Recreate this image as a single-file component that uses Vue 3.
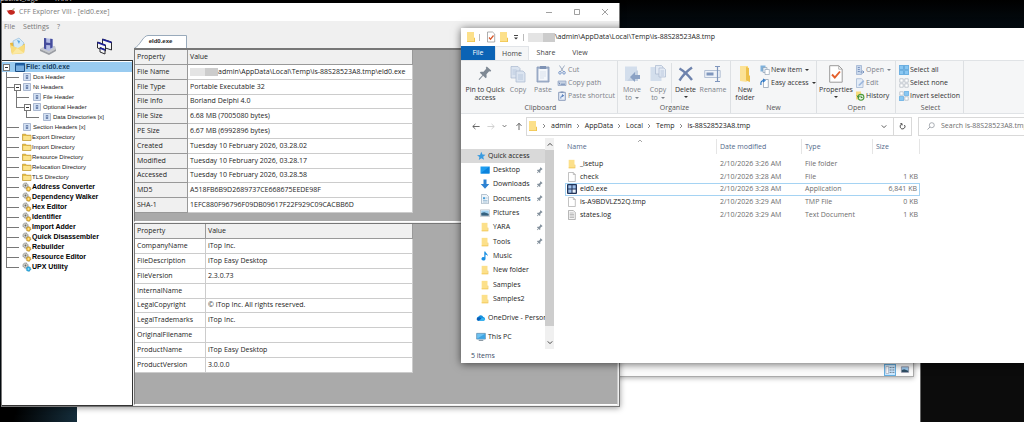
<script setup>
const tree = [
  { g: 't', icon: 'doc', text: 'Dos Header' },
  { g: 't', icon: 'doc', text: 'Nt Headers', open: true },
  { g: 'vt', icon: 'doc', text: 'File Header' },
  { g: 'vl', icon: 'doc', text: 'Optional Header', open: true },
  { g: 'vel', icon: 'doc', text: 'Data Directories [x]' },
  { g: 't', icon: 'doc', text: 'Section Headers [x]' },
  { g: 't', icon: 'dir', text: 'Export Directory' },
  { g: 't', icon: 'dir', text: 'Import Directory' },
  { g: 't', icon: 'dir', text: 'Resource Directory' },
  { g: 't', icon: 'dir', text: 'Relocation Directory' },
  { g: 't', icon: 'dir', text: 'TLS Directory' },
  { g: 't', icon: 'gear', text: 'Address Converter', bold: true },
  { g: 't', icon: 'gear', text: 'Dependency Walker', bold: true },
  { g: 't', icon: 'gear', text: 'Hex Editor', bold: true },
  { g: 't', icon: 'gear', text: 'Identifier', bold: true },
  { g: 't', icon: 'gear', text: 'Import Adder', bold: true },
  { g: 't', icon: 'gear', text: 'Quick Disassembler', bold: true },
  { g: 't', icon: 'gear', text: 'Rebuilder', bold: true },
  { g: 't', icon: 'gear', text: 'Resource Editor', bold: true },
  { g: 'l', icon: 'gear-blue', text: 'UPX Utility', bold: true },
]
const fileInfo = [
  ['File Name', 'admin\\AppData\\Local\\Temp\\is-88S28523A8.tmp\\eld0.exe'],
  ['File Type', 'Portable Executable 32'],
  ['File Info', 'Borland Delphi 4.0'],
  ['File Size', '6.68 MB (7005080 bytes)'],
  ['PE Size', '6.67 MB (6992896 bytes)'],
  ['Created', 'Tuesday 10 February 2026, 03.28.02'],
  ['Modified', 'Tuesday 10 February 2026, 03.28.17'],
  ['Accessed', 'Tuesday 10 February 2026, 03.28.58'],
  ['MD5', 'A518FB6B9D2689737CE668675EEDE98F'],
  ['SHA-1', '1EFC880F96796F09DB09617F22F929C09CACBB6D'],
]
const versionInfo = [
  ['CompanyName', 'iTop Inc.'],
  ['FileDescription', 'iTop Easy Desktop'],
  ['FileVersion', '2.3.0.73'],
  ['InternalName', ''],
  ['LegalCopyright', '© iTop Inc. All rights reserved.'],
  ['LegalTrademarks', 'iTop Inc.'],
  ['OriginalFilename', ''],
  ['ProductName', 'iTop Easy Desktop'],
  ['ProductVersion', '3.0.0.0'],
]
const crumbs = ['admin', 'AppData', 'Local', 'Temp', 'is-88S28523A8.tmp']
const places = [
  { icon: 'desktop', text: 'Desktop', pin: true },
  { icon: 'download', text: 'Downloads', pin: true },
  { icon: 'document', text: 'Documents', pin: true },
  { icon: 'picture', text: 'Pictures', pin: true },
  { icon: 'folder', text: 'YARA', pin: true },
  { icon: 'folder', text: 'Tools', pin: true },
  { icon: 'music', text: 'Music' },
  { icon: 'folder', text: 'New folder' },
  { icon: 'folder', text: 'Samples' },
  { icon: 'folder', text: 'Samples2' },
]
const files = [
  { icon: 'folder', name: '_isetup', date: '2/10/2026 3:26 AM', type: 'File folder', size: '' },
  { icon: 'page', name: 'check', date: '2/10/2026 3:28 AM', type: 'File', size: '1 KB' },
  { icon: 'program', name: 'eld0.exe', date: '2/10/2026 3:28 AM', type: 'Application', size: '6,841 KB', active: true },
  { icon: 'page', name: 'is-A9BDVLZ52Q.tmp', date: '2/10/2026 3:29 AM', type: 'TMP File', size: '0 KB' },
  { icon: 'log', name: 'states.log', date: '2/10/2026 3:29 AM', type: 'Text Document', size: '1 KB' },
]
const groups = [
  {
    name: 'Clipboard', cls: 'g-clip',
    big: [
      { icon: 'pin', text: 'Pin to Quick\naccess', w: 'w42' },
      { icon: 'copy', text: 'Copy', w: 'w24', off: true },
      { icon: 'paste', text: 'Paste', w: 'w26', off: true },
    ],
    small: [
      { icon: 'cut', text: 'Cut', off: true },
      { icon: 'path', text: 'Copy path', off: true },
      { icon: 'shortcut', text: 'Paste shortcut', off: true },
    ],
  },
  {
    name: 'Organize', cls: 'g-org',
    big: [
      { icon: 'moveto', text: 'Move\nto', w: 'w26', off: true, drop: true },
      { icon: 'copyto', text: 'Copy\nto', w: 'w26', off: true, drop: true },
      { icon: 'delete', text: 'Delete', w: 'w28', arrow: true, sep: true },
      { icon: 'rename', text: 'Rename', w: 'w28', off: true },
    ],
    small: [],
  },
  {
    name: 'New', cls: 'g-new',
    big: [{ icon: 'newfolder', text: 'New\nfolder', w: 'w28' }],
    small: [
      { icon: 'newitem', text: 'New item', drop: true },
      { icon: 'easy', text: 'Easy access', drop: true },
    ],
  },
  {
    name: 'Open', cls: 'g-open',
    big: [{ icon: 'props', text: 'Properties', w: 'w36', arrow: true }],
    small: [
      { icon: 'open', text: 'Open', off: true, drop: true },
      { icon: 'edit', text: 'Edit', off: true },
      { icon: 'history', text: 'History' },
    ],
  },
  {
    name: 'Select', cls: 'g-sel', big: [],
    small: [
      { icon: 'selall', text: 'Select all' },
      { icon: 'selnone', text: 'Select none' },
      { icon: 'selinv', text: 'Invert selection' },
    ],
  },
]
</script>

<template>
  <svg class="defs" aria-hidden="true">
    <symbol id="doc" viewBox="0 0 8 8"><path d="M.5 .5h7v7h-7z" fill="#d5e2f4" stroke="#9aabc8" stroke-width=".8" /><path d="M2.800 2h2.400v4H2.800z" fill="#6f86b0" /><path d="M2.800 3.600h2.400" stroke="#c3d2ea" stroke-width=".6" /></symbol>
    <symbol id="dir" viewBox="0 0 10 8"><path d="M.5 1.200h3.200l1 1H9v5.300H.5z" fill="#e8bd3c" stroke="#b58a20" stroke-width=".6" /><path d="M1.200 3h7.500v4H1.200z" fill="#fbe38c" /></symbol>
    <symbol id="gear" viewBox="0 0 10 10"><circle cx="3.500" cy="3.500" r="2.500" fill="#d4d4cc" stroke="#777" stroke-dasharray="1 .5" /><circle cx="3.500" cy="3.500" r=".9" fill="#666" /><circle cx="6.500" cy="7" r="2.200" fill="#f0c248" stroke="#a37719" stroke-dasharray="1 .5" /><circle cx="6.500" cy="7" r=".7" fill="#fff3b5" /></symbol>
    <symbol id="gear-blue" viewBox="0 0 10 10"><circle cx="3.500" cy="3.500" r="2.500" fill="#d4d4cc" stroke="#777" stroke-dasharray="1 .5" /><circle cx="3.500" cy="3.500" r=".9" fill="#666" /><circle cx="6.500" cy="7" r="2.200" fill="#38b4ea" stroke="#1b86b8" stroke-dasharray="1 .5" /><circle cx="6.500" cy="7" r=".7" fill="#b8ecff" /></symbol>
    <symbol id="chili" viewBox="0 0 10 8"><path d="M.5 2.200c1.500 .8 2.500-.3 4.500-.2s4.200 .6 3.900 2.600C8.500 6.700 5.500 7.300 3.500 6.200 2 5.400 1.800 3.600 .5 2.200z" fill="#c3271f" /><path d="M6.500 2.200c.3-1 .9-1.400 2-1.400" stroke="#6b7a3a" stroke-width=".8" fill="none" /></symbol>
    <symbol id="openfile" viewBox="0 0 18 18"><path d="M1 6l6-1 9 2-1 9-12 1z" fill="#eab83c" /><path d="M4 4l6-3 5 5-3 6-7-1z" fill="#d5ebfa" stroke="#8cb6d8" stroke-width=".6" /><path d="M8 3l3 1-1 3z" fill="#57a5dd" /><path d="M1 8l8 3 7-4-1 9-12 1.500z" fill="#f8dc7d" /><path d="M3 17l5-6 7 5z" fill="#fbe9a4" /></symbol>
    <symbol id="savefile" viewBox="0 0 18 18"><path d="M1 12l5-3h10l1 3-7 4z" fill="#c5c8cd" /><path d="M1 12l9 4 7-4v2l-7 4-9-4z" fill="#9b9ea4" /><path d="M5 1l9 1v9l-4 3-5-2z" fill="#b4bce4" /><path d="M5 1l2.200 .3v4.200l4 .4V1.700l2.300 .3v8.500l-2.300 1V8.300l-4-.4v4.300L5 11.500z" fill="#454c9c" /></symbol>
    <symbol id="wins" viewBox="0 0 18 18"><g fill="#f6f6f6" stroke="#2b2b30" stroke-width="1"><path d="M6.500 2l9 3v8l-9-3z" /><path d="M1.500 5l8 3v6l-8-3z" /><path d="M4 10.500l5 2V17l-5-2z" /></g><path d="M6.500 2.500l9 3M1.500 5.500l8 3M4 11l5 2" stroke="#1d209b" stroke-width="1.800" /></symbol>
    <symbol id="window" viewBox="0 0 10 9"><path d="M.5 .5h9v8h-9z" fill="#77aee0" stroke="#1c4f85" /><path d="M.5 .5h9v2h-9z" fill="#1c5fa5" /></symbol>
    <symbol id="folder" viewBox="0 0 10 12"><path d="M1 1h7v10H1z" fill="#fce08a" /><path d="M8 6.500l1 .5v4H1v-.8h7z" fill="#efc44f" /></symbol>
    <symbol id="newfolder" viewBox="0 0 14 18"><path d="M2 1h8v15H2z" fill="#fbdd83" /><path d="M8 2l3 1v7l1 1v6l-4-1.500z" fill="#edc04b" /><path d="M2 1h6v14l1 2-7-1z" fill="#fce296" /></symbol>
    <symbol id="check" viewBox="0 0 10 12"><path d="M1.500 1h5L8.700 3v8H1.500z" fill="#fff" stroke="#8c8c8c" stroke-width=".7" /><path d="M3 6.500l1.500 1.700L7.500 4.500" fill="none" stroke="#d9592b" stroke-width="1.200" /></symbol>
    <symbol id="props" viewBox="0 0 14 18"><path d="M.7 .7h9l3.500 3.500v13H.7z" fill="#fff" stroke="#9a9a9a" /><path d="M9.700 .7v3.500h3.500" fill="none" stroke="#9a9a9a" stroke-width=".7" /><path d="M3 9.500l2.800 3L11 6.500" fill="none" stroke="#e4602c" stroke-width="1.900" /></symbol>
    <symbol id="pin" viewBox="0 0 16 18"><g transform="rotate(42 8 8)"><path d="M5 2h6v1.500l-1 .5v4l2 2v1.300H4V10l2-2V4l-1-.5z" fill="#7f8994" /><path d="M7.500 11h1v6h-1z" fill="#7f8994" /></g></symbol>
    <symbol id="smallpin" viewBox="0 0 8 8"><g transform="rotate(42 4 4)"><path d="M2.500 .5h3v1l-.5.300v2l1.200 1.200v.8H1.800V5L3 3.800v-2l-.5-.3z" fill="#83909c" /><path d="M3.600 5.500h.8V8h-.8z" fill="#83909c" /></g></symbol>
    <symbol id="copy" viewBox="0 0 16 18"><g fill="#dbe4f0" stroke="#a9b8ce" stroke-width=".7"><path d="M1 1.500h7l2 2V13H1z" /><path d="M6 6h7l2 2v9H6z" /></g><path d="M2.500 5h4M2.500 7h3M2.500 9h3M8 10h5M8 12h5M8 14h5" stroke="#b3c2d9" stroke-width=".8" /></symbol>
    <symbol id="paste" viewBox="0 0 16 18"><path d="M2 2h12v15H2z" fill="#a9b8d0" stroke="#8498b8" stroke-width=".8" /><path d="M3.500 4h9v11.500h-9z" fill="#f4f7fb" /><path d="M5 1h6v3H5z" fill="#7f93b5" /><path d="M5 7h6M5 9h6M5 11h6M5 13h4" stroke="#cdd7e6" stroke-width=".7" /></symbol>
    <symbol id="cut" viewBox="0 0 8 10"><path d="M1.500 .5l3.800 6M6.500 .5l-3.800 6" stroke="#8a9bb5" stroke-width=".8" /><circle cx="2" cy="7.800" r="1.300" fill="none" stroke="#6d8fc4" stroke-width=".9" /><circle cx="6" cy="7.800" r="1.300" fill="none" stroke="#6d8fc4" stroke-width=".9" /></symbol>
    <symbol id="path" viewBox="0 0 9 10"><path d="M.5 3h8v4.500h-8z" fill="#c8d3e4" stroke="#8fa1bf" stroke-width=".7" /><path d="M1.500 4.500l1 2M3.500 6.200h4" stroke="#5774a5" stroke-width=".8" /></symbol>
    <symbol id="shortcut" viewBox="0 0 8 10"><path d="M.7 1.300h6.600v8H.7z" fill="#e9eff8" stroke="#7f93b5" stroke-width=".9" /><path d="M2.500 .5h3v1.500h-3z" fill="#7f93b5" /><path d="M2.800 7.500c0-2 .5-3 2.500-3M4 3.500l1.500 1L4.300 6" fill="none" stroke="#4470b5" stroke-width=".9" /></symbol>
    <symbol id="moveto" viewBox="0 0 16 18"><path d="M1 1.500h12V16H1z" fill="#d3deec" /><path d="M13 5l1 1v10H3z" fill="#c5d2e3" /><path d="M6 12l5-5v3h5v4h-5v3z" fill="#8ca2c4" /></symbol>
    <symbol id="copyto" viewBox="0 0 16 18"><path d="M.5 2h11v14H.5z" fill="#d3deec" /><g fill="#e3eaf4" stroke="#a9b8ce" stroke-width=".7"><path d="M5.500 .5h6l1.500 1.500v7h-7.500z" /><path d="M9 3h5l1.500 1.500V12H9z" /></g><path d="M10.500 6h3.500M10.500 8h3.500M10.500 10h3.500" stroke="#b3c2d9" stroke-width=".8" /></symbol>
    <symbol id="delete" viewBox="0 0 16 18"><path d="M1.500 3.500c5 3 9 7 12.500 11.500M14 2.500C9 6 5 10 1.500 15.500" fill="none" stroke="#6e83ad" stroke-width="2.400" /></symbol>
    <symbol id="rename" viewBox="0 0 18 18"><path d="M.7 5.500h15.500v7H.7z" fill="#eef2f8" stroke="#b4c1d4" /><path d="M2.500 7.500h7v3h-7z" fill="#7f96bd" /><path d="M11 1.500h5M13.500 2v14M11 16.500h5" stroke="#7f96bd" stroke-width="1.200" /></symbol>
    <symbol id="newitem" viewBox="0 0 10 10"><path d="M.5 .5h5v6h-5z" fill="#7fb2dc" /><path d="M3 2.500h4v5H3z" fill="#e5eef7" stroke="#8597ab" stroke-width=".6" /><path d="M5 4.500h4.300v5H5z" fill="#fff" stroke="#8597ab" stroke-width=".6" /></symbol>
    <symbol id="easy" viewBox="0 0 10 10"><path d="M3.500 1.500h4.800v8H3.500z" fill="#fff" stroke="#8597ab" stroke-width=".7" /><path d="M1 7c-.5-3 .5-4.500 3-4.500M3 1l2 1.500L3 4" fill="none" stroke="#2a76c6" stroke-width="1.100" /></symbol>
    <symbol id="open" viewBox="0 0 9 10"><path d="M1 .5h5v9H1z" fill="#c9d8ec" stroke="#8ba2c6" stroke-width=".6" /><path d="M2.300 2.500h2M2.300 4.500h2M2.300 6.500h2" stroke="#7b94bf" /><path d="M5 7h3M7 5.500L8.500 7 7 8.500" fill="none" stroke="#6f8cbb" stroke-width=".9" /></symbol>
    <symbol id="edit" viewBox="0 0 9 10"><path d="M1 .7h5l1.500 1.500v7.300H1z" fill="#e3ecf7" stroke="#9bb0cf" stroke-width=".7" /><path d="M3 8l.5-1.700 4-4 1.300 1-4.200 4.200z" fill="#9db8dd" /></symbol>
    <symbol id="history" viewBox="0 0 9 10"><path d="M.5 .5h5v8h-5z" fill="#f8dc7d" /><circle cx="5.500" cy="6.300" r="2.900" fill="#e7f4e2" stroke="#4c9a3d" stroke-width="1.100" /><path d="M5.500 4.700v1.800h1.500M1.500 4.500l1.300 2 1.500-1" fill="none" stroke="#2f7d24" stroke-width=".9" /></symbol>
    <symbol id="selall" viewBox="0 0 10 10"><path d="M.3 .3h4.300v4.300H.3zM5.400 .3h4.300v4.300H5.400zM.3 5.400h4.300v4.300H.3zM5.400 5.400h4.300v4.300H5.400z" fill="#8ac7f2" stroke="#2f8cd0" stroke-width=".6" /></symbol>
    <symbol id="selnone" viewBox="0 0 10 10"><path d="M.8 .8h3.400v3.400H.8zM5.800 .8h3.400v3.400H5.800zM.8 5.800h3.400v3.400H.8zM5.800 5.800h3.400v3.400H5.800z" fill="#fff" stroke="#aab3bd" stroke-width=".7" /></symbol>
    <symbol id="selinv" viewBox="0 0 10 10"><path d="M5.400 .3h4.300v4.300H5.400zM.3 5.400h4.300v4.300H.3z" fill="#8ac7f2" stroke="#4a9edb" stroke-width=".6" /><path d="M.8 .8h3.400v3.400H.8zM5.800 5.800h3.400v3.400H5.800z" fill="#fff" stroke="#aab3bd" stroke-width=".7" /></symbol>
    <symbol id="star" viewBox="0 0 10 10"><path d="M5.300 .8l1.200 2.800 3 .2-2.300 2 .8 3-2.600-1.600L2.800 9l.6-3L1 4.200l3-.3z" fill="#3a9be0" /></symbol>
    <symbol id="desktop" viewBox="0 0 10 10"><path d="M.5 1.500h9v7h-9z" fill="#1e9df0" /><path d="M.5 8.500l9-7v7z" fill="#0b82dc" /></symbol>
    <symbol id="download" viewBox="0 0 10 10"><path d="M3.500 .5h3V5H9.300L5 9.700.7 5h2.800z" fill="#2d82d2" /></symbol>
    <symbol id="document" viewBox="0 0 10 10"><path d="M1.500 .5h5l2 2v7.200h-7z" fill="#eef4f9" stroke="#8ba0b3" stroke-width=".6" /><path d="M3 3.200h2.200v2H3z" fill="#4b9fd8" /><path d="M6 4h1.500M3 6.500h4.500M3 8h4.500" stroke="#7ba5c4" stroke-width=".6" /></symbol>
    <symbol id="picture" viewBox="0 0 10 10"><path d="M.5 1.800h9v6.700h-9z" fill="#fff" stroke="#9aa5ae" stroke-width=".5" /><path d="M1.200 2.500h7.600v3H1.200z" fill="#9fd0f0" /><path d="M1.200 5l3-.8 4.600 1.600v2H1.200z" fill="#35617f" /></symbol>
    <symbol id="music" viewBox="0 0 10 10"><path d="M4.300 .5h1c.2 1.800 2.700 2 2.500 4.800-.5-1-1.300-1.500-2.300-1.700V8A2 1.700 0 1 1 4.300 6.300z" fill="#1a8fe3" /></symbol>
    <symbol id="cloud" viewBox="0 0 11 9"><path d="M2.800 7.500a2.200 2.200 0 0 1-.3-4.300A3 3 0 0 1 8 3.300a2.200 2.200 0 0 1 .6 4.200z" fill="#1490df" /><path d="M3 7.500l3.500-3.300 3.200.8a1.500 1.500 0 0 1-1 2.500z" fill="#34b3f0" /><path d="M.8 6c0-2 2-3 3.500-2L6 5 3 7.500C1.500 7.400.8 6.800.8 6z" fill="#0a5fb8" /></symbol>
    <symbol id="pc" viewBox="0 0 11 10"><path d="M.7 1h9.600v6.300H.7z" fill="#6ec2f2" stroke="#4d7fa3" stroke-width=".7" /><path d="M1 7L10 1.300V7z" fill="#3fa5e3" /><path d="M3 8.700h5" stroke="#6d7e8c" /></symbol>
    <symbol id="page" viewBox="0 0 10 10"><path d="M1.500 .5h4.800l2 2v7H1.500z" fill="#fff" stroke="#9a9a9a" stroke-width=".6" /><path d="M6.300 .5v2h2" fill="none" stroke="#9a9a9a" stroke-width=".6" /></symbol>
    <symbol id="log" viewBox="0 0 10 10"><path d="M1.500 .5h4.800l2 2v7H1.500z" fill="#f4f4f4" stroke="#8a8a8a" stroke-width=".6" /><path d="M2.700 3h4M2.700 4.500h4.300M2.700 6h4.300M2.700 7.500h4.300" stroke="#999" stroke-width=".6" /></symbol>
    <symbol id="program" viewBox="0 0 10 10"><rect width="10" height="10" rx="1" fill="#22355a" /><path d="M1.300 1.300h3.200v3.200H1.300zM5.500 1.300h3.200v3.200H5.500zM1.300 5.500h3.200v3.200H1.300z" fill="#9fc0e8" /><path d="M5.500 5.500h3.200v3.200H5.500z" fill="#e9f1fb" /></symbol>
    <symbol id="arrow" viewBox="0 0 10 8"><path d="M9.500 4H1M4.300 .8L1 4l3.300 3.200" fill="none" stroke="currentColor" stroke-width="1.100" /></symbol>
    <symbol id="chev" viewBox="0 0 8 6"><path d="M1 1.500l3 3 3-3" fill="none" stroke="currentColor" stroke-width="1.300" /></symbol>
    <symbol id="refresh" viewBox="0 0 8 8"><path d="M6.300 2.300A2.800 2.800 0 1 1 3 1.400M1.500 .8h2v2" fill="none" stroke="currentColor" stroke-width=".9" /></symbol>
    <symbol id="lens" viewBox="0 0 8 8"><circle cx="4.800" cy="3.200" r="2.500" fill="none" stroke="#8a8f98" stroke-width=".7" /><path d="M3 5L.5 7.500" stroke="#8a8f98" stroke-width=".8" /></symbol>
  </svg>

  <main class="desk">
    <span class="label l-a">packet_logs</span>
    <span class="label l-b">YARA</span>
    <div class="back-page"></div>
    <div class="console"></div>
    <div class="back-win">
      <span class="view on"><svg viewBox="0 0 12 10"><path d="M1 .5h3v9H1z" fill="#fff" stroke="#889" stroke-width=".6" /><path d="M5.500 2h2.500M5.500 5h2.500M5.500 8h2.500M9 2h2.500M9 5h2.500M9 8h2.500" stroke="#567" /></svg></span>
      <span class="view"><svg viewBox="0 0 12 10"><path d="M1.500 1h9v7h-9z" fill="#9cc9ee" stroke="#889" /><path d="M2 5l3-1 5 2v1.500H2z" fill="#2e4d63" /></svg></span>
    </div>

    <section class="cff">
      <header class="cff-title">
        <svg class="chili"><use href="#chili" /></svg>
        <h1>CFF Explorer VIII - [eld0.exe]</h1>
        <div class="ctl">
          <button aria-label="Minimize"><svg viewBox="0 0 8 8"><path d="M1 4.500h6" stroke="#888" stroke-width=".8" /></svg></button>
          <button aria-label="Maximize"><svg viewBox="0 0 8 8"><path d="M1.500 1.500h5v5h-5z" fill="none" stroke="#888" stroke-width=".8" /></svg></button>
          <button aria-label="Close"><svg viewBox="0 0 8 8"><path d="M1 1l6 6M7 1L1 7" stroke="#888" stroke-width=".8" /></svg></button>
        </div>
      </header>
      <nav class="menu"><button>File</button><button>Settings</button><button>?</button></nav>
      <div class="cff-body">
        <div class="left">
          <div class="tools">
            <button aria-label="Open"><svg><use href="#openfile" /></svg></button>
            <button aria-label="Save"><svg><use href="#savefile" /></svg></button>
            <button class="far" aria-label="Windows"><svg><use href="#wins" /></svg></button>
          </div>
          <ul class="tree">
            <li class="root"><i class="box"></i><svg class="wicon"><use href="#window" /></svg><span>File: eld0.exe</span></li>
            <li v-for="n in tree" :key="n.text" :class="{ bold: n.bold }">
              <i v-for="(c, k) in n.g" :key="k" class="g" :class="'g-' + c"></i>
              <i class="last" :class="{ node: n.open }"><i v-if="n.open" class="box"></i></i>
              <svg :class="'ic-' + n.icon"><use :href="'#' + n.icon" /></svg>
              <span>{{ n.text }}</span>
            </li>
          </ul>
        </div>
        <div class="right">
          <div class="tabs"><div class="tab"><svg viewBox="0 0 53 13" preserveAspectRatio="none"><path d="M.5 13C6 11 9 .5 14 .5H52.500V13" fill="#fff" stroke="#9ab" /></svg><button>eld0.exe</button></div></div>
          <div class="pane top">
            <table class="props t1">
              <thead><tr><th>Property</th><th>Value</th></tr></thead>
              <tbody>
                <tr v-for="(r, k) in fileInfo" :key="r[0]"><th>{{ r[0] }}</th><td><i v-if="k === 0" class="mask"></i>{{ r[1] }}</td></tr>
              </tbody>
            </table>
          </div>
          <div class="pane bottom">
            <table class="props t2">
              <thead><tr><th>Property</th><th>Value</th></tr></thead>
              <tbody>
                <tr v-for="r in versionInfo" :key="r[0]"><td>{{ r[0] }}</td><td>{{ r[1] }}</td></tr>
              </tbody>
            </table>
          </div>
        </div>
      </div>
    </section>

    <section class="exp">
      <header class="exp-title">
        <svg><use href="#folder" /></svg><i class="bar"></i>
        <svg><use href="#check" /></svg><svg><use href="#folder" /></svg>
        <svg class="qa" viewBox="0 0 6 8"><path d="M1 2.500h4" stroke="#333" stroke-width=".9" /><path d="M1 4.500h4L3 6.500z" fill="#333" /></svg>
        <i class="bar end"></i><i class="mask"></i>
        <h2>\admin\AppData\Local\Temp\is-88S28523A8.tmp</h2>
      </header>
      <nav class="rtabs"><button class="file">File</button><button class="on">Home</button><button>Share</button><button>View</button></nav>
      <div class="ribbon">
        <div v-for="g in groups" :key="g.name" class="group" :class="g.cls">
          <div class="items">
            <button v-for="b in g.big" :key="b.text" class="big" :class="[b.w, { off: b.off, sep: b.sep }]">
              <svg><use :href="'#' + b.icon" /></svg>
              <span>{{ b.text }}<i v-if="b.drop" class="dd"></i></span><i v-if="b.arrow" class="dd"></i>
            </button>
            <div v-if="g.small.length" class="smalls">
              <button v-for="s in g.small" :key="s.text" :class="{ off: s.off }">
                <svg><use :href="'#' + s.icon" /></svg>{{ s.text }}<i v-if="s.drop" class="dd"></i>
              </button>
            </div>
          </div>
          <div class="gname">{{ g.name }}</div>
        </div>
      </div>
      <div class="addr">
        <button aria-label="Back"><svg><use href="#arrow" /></svg></button>
        <button class="dim" aria-label="Forward"><svg class="flip"><use href="#arrow" /></svg></button>
        <button class="mini" aria-label="Recent"><svg><use href="#chev" /></svg></button>
        <button aria-label="Up"><svg class="up"><use href="#arrow" /></svg></button>
        <div class="crumbs">
          <svg class="cf"><use href="#folder" /></svg>
          <template v-for="c in crumbs" :key="c"><svg class="sepc"><use href="#chev" /></svg><button>{{ c }}</button></template>
          <button class="dropb" aria-label="Previous locations"><svg><use href="#chev" /></svg></button>
          <button class="refresh" aria-label="Refresh"><svg><use href="#refresh" /></svg></button>
        </div>
        <label class="search"><svg><use href="#lens" /></svg><input type="text" aria-label="Search" placeholder="Search is-88S28523A8.tmp"></label>
      </div>
      <div class="content">
        <div class="side">
          <nav class="nav">
            <a href="#" class="quick"><svg><use href="#star" /></svg>Quick access</a>
            <div class="places">
              <a v-for="p in places" :key="p.text" href="#"><svg><use :href="'#' + p.icon" /></svg><span>{{ p.text }}</span><svg v-if="p.pin" class="sp"><use href="#smallpin" /></svg></a>
            </div>
            <a href="#" class="rootp"><svg><use href="#cloud" /></svg>OneDrive - Personal</a>
            <a href="#" class="rootp"><svg><use href="#pc" /></svg>This PC</a>
          </nav>
          <div class="scroll"><svg class="up"><use href="#chev" /></svg><i></i><svg><use href="#chev" /></svg></div>
        </div>
        <div class="list">
          <svg class="sort"><use href="#chev" /></svg>
          <table>
            <thead><tr><th class="c1">Name</th><th class="c2">Date modified</th><th class="c3">Type</th><th class="c4">Size</th></tr></thead>
            <tbody>
              <tr v-for="f in files" :key="f.name" :class="{ active: f.active }">
                <td><div class="nm"><svg><use :href="'#' + f.icon" /></svg>{{ f.name }}</div></td>
                <td>{{ f.date }}</td><td>{{ f.type }}</td><td class="num">{{ f.size }}</td>
              </tr>
            </tbody>
          </table>
        </div>
      </div>
      <footer class="status">5 items</footer>
    </section>
  </main>
</template>

<style>
body { background: #000; }
</style>

<style scoped>
.desk { position: relative; min-height: 100vh; overflow: hidden; background: linear-gradient(#000 0, #040c12 28px); font: 7px/10px "Open Sans", "Noto Sans", sans-serif; color: #1c1c1c; }
.defs { position: absolute; width: 0; height: 0; }
button { border: 0; padding: 0; margin: 0; background: none; font: inherit; color: inherit; white-space: nowrap; }
a { color: inherit; text-decoration: none; }
svg { flex: none; display: block; }
h1, h2 { margin: 0; font: inherit; white-space: nowrap; }
i { font-style: normal; }
ul { list-style: none; margin: 0; padding: 0; }

.label { position: absolute; top: -6px; color: #ddd; }
.l-a { left: 0; }
.l-b { left: 54px; }
.desk::before { content: ""; position: absolute; left: 0; bottom: 0; width: 77px; height: 20px; background: linear-gradient(100deg, #000 20%, #152e3c); }
.back-page { position: absolute; left: 77px; right: 104px; top: 28px; bottom: 0; background: #fff; }
.console { position: absolute; right: 0; width: 103px; top: 28px; bottom: 0; background: #0c0c0c; border-left: 1px solid #666; }
.back-win { position: absolute; left: 500px; top: 200px; right: 110px; height: 175px; background: #fbfbfb; border: 1px solid #aaa; box-shadow: 0 1px 5px #0005; display: flex; align-items: flex-end; justify-content: flex-end; gap: 1px; }
.view { width: 12px; height: 12px; margin-right: 2px; display: grid; place-items: center; border: 1px solid transparent; box-sizing: border-box; }
.view.on { background: #cce8ff; border-color: #66afe0; }
.view svg { width: 10px; height: 8px; }

.cff { position: absolute; left: 1px; top: 3px; width: 619px; height: 404px; box-sizing: border-box; background: #f0f0f0; border: solid #777; border-width: 0 1px 1px; box-shadow: 0 1px 6px #0006; display: flex; flex-direction: column; }
.cff-title { height: 18px; background: #fff; display: flex; align-items: center; padding-left: 4px; color: #7c7c7c; }
.cff-title h1 { margin-left: 3px; flex: 1; }
.chili { width: 10px; height: 8px; }
.ctl { display: flex; }
.ctl button { width: 28px; display: grid; place-items: center; }
.ctl svg { width: 8px; height: 8px; }
.menu { height: 12px; display: flex; align-items: center; gap: 8px; padding-left: 2px; color: #777; }
.cff-body { flex: 1; display: flex; min-height: 0; }
.left { width: 131px; display: flex; flex-direction: column; }
.tools { height: 27px; display: flex; align-items: center; padding: 0 0 2px 7px; gap: 12px; box-sizing: border-box; }
.tools svg { width: 18px; height: 18px; }
.tools .far { margin-left: 27px; }
.tree { flex: 1; background: #fff; border: 1px solid #333; border-left: 0; padding-top: 1px; font: 6px/10px "Liberation Sans", Arial, sans-serif; color: #222; }
.tree li { height: 10px; display: flex; align-items: center; }
.tree .bold, .root { font-size: 7px; font-weight: bold; color: #000; }
.tree .root { background: #99cbf0; color: #133a5c; }
.root .box { margin: 0 5px 0 1px; }
.wicon { width: 10px; height: 9px; margin-right: 1px; }
.box { width: 5px; height: 5px; border: 1px solid #777; background: linear-gradient(#333, #333) center/3px 1px no-repeat #fff; flex: none; box-sizing: content-box; }
.g { width: 10px; height: 10px; flex: none; }
.g-v { background: linear-gradient(#777, #777) 4px 0/1px 10px no-repeat; }
.g-t { background: linear-gradient(#777, #777) 4px 0/1px 10px no-repeat, linear-gradient(#777, #777) 4px 5px/6px 1px no-repeat; }
.g-l { background: linear-gradient(#777, #777) 4px 0/1px 5px no-repeat, linear-gradient(#777, #777) 4px 5px/6px 1px no-repeat; }
.last { width: 10px; height: 10px; flex: none; display: grid; place-items: center; background: linear-gradient(#777, #777) 0 5px/7px 1px no-repeat; }
.node { background: linear-gradient(#777, #777) 0 5px/2px 1px no-repeat, linear-gradient(#777, #777) 4px 8px/1px 2px no-repeat; }
.ic-doc { width: 8px; height: 8px; margin: 0 2px 0 1px; }
.ic-dir { width: 10px; height: 8px; }
.ic-gear, .ic-gear-blue { width: 10px; height: 10px; }
.tree li span { white-space: nowrap; }

.right { flex: 1; display: flex; flex-direction: column; min-width: 0; padding: 2px 1px 1px 1px; }
.tabs { height: 13px; }
.tab { position: relative; width: 53px; height: 13px; }
.tab svg { position: absolute; inset: 0; width: 53px; height: 13px; }
.tab button { position: relative; width: 53px; height: 12px; font: bold 6px/12px "Liberation Sans", Arial, sans-serif; }
.pane { background: #aaa; border: 1px solid #777; border-right-color: #ccc; border-bottom-color: #fff; box-sizing: border-box; }
.top { height: 174px; border-top-width: 2px; margin-bottom: 1px; }
.bottom { flex: 1; }
.props { width: 278px; border-collapse: separate; border-spacing: 0; background: #fff; table-layout: fixed; }
.t1 { height: 163px; }
.t2 { height: 149px; }
.props thead th { height: 14px; }
.props th, .props td { padding: 0 0 0 2px; font-weight: normal; text-align: left; border-right: 1px solid #ccc; border-bottom: 1px solid #ccc; line-height: 10px; white-space: nowrap; }
.props th { background: #f0f0f0; border-color: #999; }
.t1 th:first-child { width: 50px; }
.t2 th:first-child { width: 68px; }
.mask { display: inline-block; height: 8px; background: linear-gradient(90deg, #e4e4e4 55%, #ccc 55%); }
.props .mask { width: 28px; vertical-align: middle; }

.exp { position: absolute; left: 461px; right: 0; top: 28px; background: #fff; box-shadow: 0 1px 8px #0009; height: 335px; display: flex; flex-direction: column; overflow: visible; }
.exp-title { height: 18px; display: flex; align-items: center; padding-left: 5px; }
.exp-title svg { width: 10px; height: 12px; }
.exp-title .qa { width: 6px; height: 8px; margin: 0 3px 0 4px; }
.exp-title svg + svg { margin-left: 3px; }
.exp-title .bar { width: 1px; height: 7px; background: #bbb; margin: 0 6px 0 3px; }
.exp-title .end { margin: 0 4px 0 1px; }
.exp-title .mask { width: 27px; height: 9px; }
.rtabs { display: flex; height: 14px; color: #444; }
.rtabs button { width: 34px; height: 14px; }
.rtabs .file { background: #0b63b5; color: #fff; }
.rtabs .on { background: #f5f6f7; border: 1px solid #e1e4e8; border-bottom: 0; }
.ribbon { display: flex; height: 54px; background: #f5f6f7; border: solid #e0e3e6; border-width: 1px 0; box-sizing: border-box; overflow: hidden; color: #333; }
.group { display: flex; flex-direction: column; border-right: 1px solid #dde0e3; box-sizing: border-box; flex: none; padding-top: 2px; }
.g-clip { width: 157px; padding-left: 3px; }
.g-org { width: 113px; padding-left: 1px; }
.g-new { width: 86px; }
.g-open { width: 79px; padding-left: 1px; }
.g-sel { width: 68px; padding-left: 2px; }
.items { display: flex; flex: 1; }
.gname { text-align: center; height: 10px; line-height: 10px; color: #555; }
.big { display: flex; flex-direction: column; align-items: center; line-height: 8px; }
.big span { white-space: pre; }
.big svg { width: 18px; height: 18px; margin: 2px 0 3px; }
.w24 { width: 24px; } .w26 { width: 26px; } .w28 { width: 28px; } .w36 { width: 36px; } .w42 { width: 42px; }
.sep { border-left: 1px solid #dde0e3; }
.off { color: #7d828a; }
.dd { display: inline-block; border: 2px solid transparent; border-top-color: currentColor; border-bottom: 0; margin-left: 3px; vertical-align: middle; }
.big > .dd { margin: 2px 0 0; }
.smalls { display: flex; flex-direction: column; margin-left: 1px; }
.smalls button { height: 13px; display: flex; align-items: center; }
.smalls svg { width: 10px; height: 10px; margin-right: 1px; }
.addr { height: 24px; display: flex; align-items: center; padding-left: 7px; color: #555; box-sizing: border-box; }
.addr > button { width: 15px; display: grid; place-items: center; }
.addr > button svg { width: 8px; height: 7px; }
.addr > .mini { width: 13px; }
.addr > .mini svg { width: 5px; height: 4px; }
.addr > .dim { color: #ccc; }
.flip { transform: scaleX(-1); }
.addr .up { transform: rotate(90deg); }
.crumbs { flex: 0 0 386px; height: 19px; border: 1px solid #d9d9d9; box-sizing: border-box; display: flex; align-items: center; color: #222; padding-left: 1px; }
.cf { width: 10px; height: 12px; }
.sepc { width: 6px; height: 4px; margin: 0 4px 0 3px; transform: rotate(-90deg); color: #777; }
.dropb { margin-left: auto; width: 18px; display: grid; place-items: center; color: #555; }
.dropb svg { width: 6px; height: 5px; }
.refresh { width: 18px; height: 17px; display: grid; place-items: center; border-left: 1px solid #d9d9d9; }
.refresh svg { width: 7px; height: 7px; }
.search { flex: 1; margin-left: 6px; height: 19px; border: 1px solid #d9d9d9; border-right: 0; box-sizing: border-box; display: flex; align-items: center; padding-left: 8px; min-width: 0; }
.search svg { width: 8px; height: 8px; }
.search input { flex: 1; min-width: 0; border: 0; padding: 0 0 0 6px; outline: 0; background: none; font: inherit; }
.search input::placeholder { color: #6d6d6d; opacity: 1; }
.content { flex: 1; display: flex; min-height: 0; }
.side { width: 93px; display: flex; }
.nav { width: 84px; overflow: hidden; padding-top: 11px; box-sizing: border-box; }
.nav a { display: flex; align-items: center; white-space: nowrap; }
.nav svg { width: 10px; height: 10px; }
.quick { height: 14px; background: #d9d9d9; padding-left: 15px; gap: 2px; }
.places { display: grid; grid-auto-rows: 1fr; height: 143px; }
.places a { padding: 0 2px 0 19px; gap: 3px; }
.places span { flex: 1; }
.nav .sp { width: 7px; height: 7px; }
.rootp { height: 19px; padding-left: 15px; gap: 2px; }
.places + .rootp { margin-top: 2px; }
.scroll { width: 9px; background: #f0f0f0; display: flex; flex-direction: column; align-items: center; gap: 3px; padding: 4px 0; box-sizing: border-box; color: #444; }
.scroll svg { width: 6px; height: 5px; }
.scroll .up { transform: scaleY(-1); }
.scroll i { width: 9px; flex: 1; background: #cdcdcd; margin-bottom: 11px; }
.list { flex: 1; padding: 0 0 0 11px; position: relative; min-width: 0; }
.sort { position: absolute; left: 83px; top: 1px; width: 6px; height: 4px; color: #999; transform: scaleY(-1); }
.list table { border-collapse: separate; border-spacing: 0; table-layout: fixed; width: 355px; height: 83px; }
.list th { height: 18px; padding: 0 0 2px 3px; font-weight: normal; text-align: left; color: #53698a; background: linear-gradient(#e5e5e5, #e5e5e5) right 1px/1px 15px no-repeat; }
.list .c1 { width: 150px; padding-left: 2px; }
.list .c2 { width: 82px; }
.list .c3 { width: 68px; }
.list td { padding: 0 0 0 3px; line-height: 10px; color: #6d6d6d; white-space: nowrap; border: solid transparent; border-width: 1px 0; }
.list td:first-child { padding-left: 1px; border-left-width: 1px; color: #222; }
.list .active td { border-color: #a5d3f3; }
.list .active td:last-child { border-right: 1px solid #a5d3f3; }
.nm { display: flex; align-items: center; gap: 3px; }
.nm svg { width: 10px; height: 10px; }
.list .num { text-align: right; padding-right: 2px; }
.status { height: 14px; line-height: 13px; padding-left: 10px; color: #3b4a66; }
</style>
